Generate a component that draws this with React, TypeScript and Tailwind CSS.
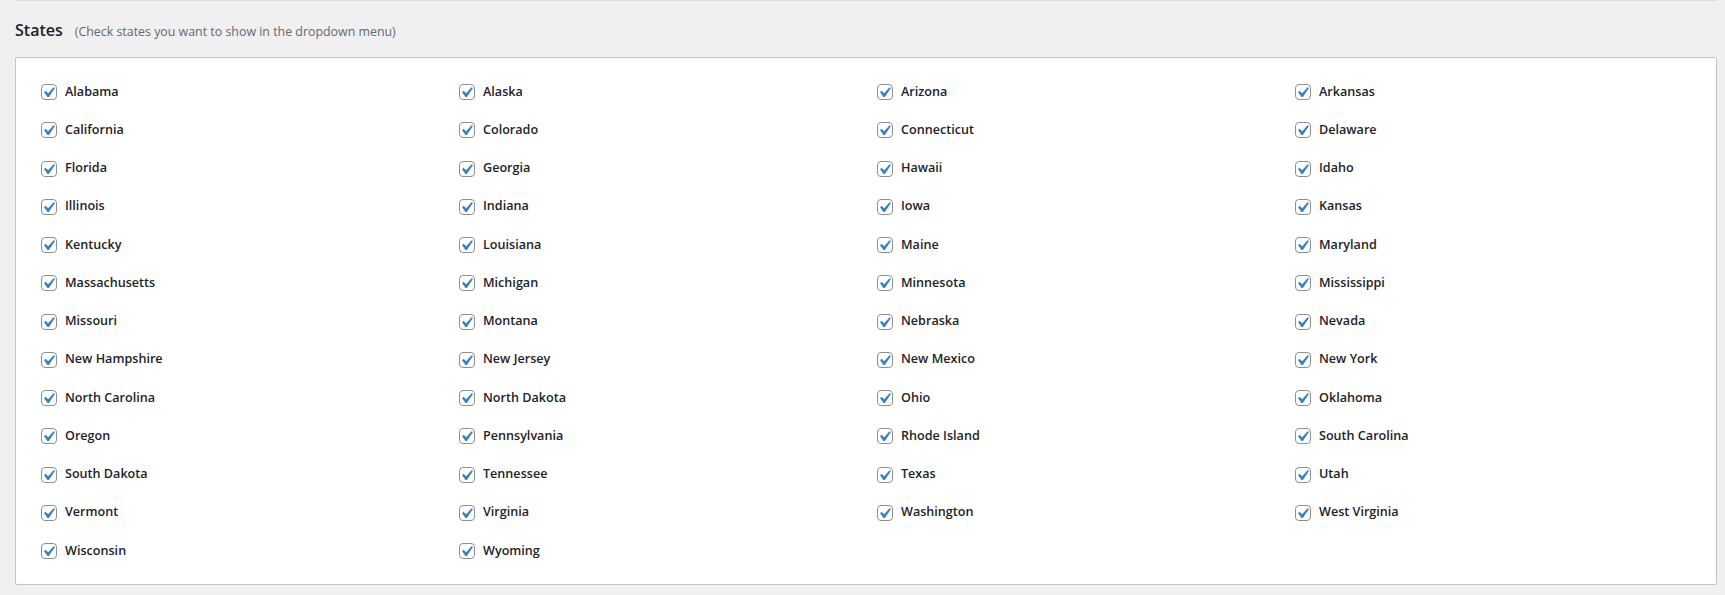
import { useState } from 'react';

const STATES = [
  'Alabama', 'Alaska', 'Arizona', 'Arkansas',
  'California', 'Colorado', 'Connecticut', 'Delaware',
  'Florida', 'Georgia', 'Hawaii', 'Idaho',
  'Illinois', 'Indiana', 'Iowa', 'Kansas',
  'Kentucky', 'Louisiana', 'Maine', 'Maryland',
  'Massachusetts', 'Michigan', 'Minnesota', 'Mississippi',
  'Missouri', 'Montana', 'Nebraska', 'Nevada',
  'New Hampshire', 'New Jersey', 'New Mexico', 'New York',
  'North Carolina', 'North Dakota', 'Ohio', 'Oklahoma',
  'Oregon', 'Pennsylvania', 'Rhode Island', 'South Carolina',
  'South Dakota', 'Tennessee', 'Texas', 'Utah',
  'Vermont', 'Virginia', 'Washington', 'West Virginia',
  'Wisconsin', 'Wyoming',
];

/* WP-style checkbox */
function Check({ checked, onChange }: { checked: boolean; onChange: () => void }) {
  return (
    <button
      type="button"
      onClick={onChange}
      className="relative w-4 h-4 shrink-0 rounded-[4px] border border-[#8c8f94] bg-white"
    >
      {checked && (
        <svg
          viewBox="0 0 20 20"
          className="absolute -top-[3px] -left-[4px] w-[21px] h-[21px]"
        >
          <path d="M14.83 4.89l1.34.94-5.81 8.38H9.02L5.78 9.67l1.34-1.25 2.57 2.4z" fill="#3582c4" />
        </svg>
      )}
    </button>
  );
}

export default function App() {
  const [checked, setChecked] = useState<Record<string, boolean>>(
    () => Object.fromEntries(STATES.map((s) => [s, true]))
  );

  return (
    <main
      className="w-[1725px] h-[595px] bg-[#f0f0f1] pl-[15px] pr-[8px] text-[#1d2327]"
      style={{ fontFamily: '"Open Sans", "Noto Sans", sans-serif' }}
    >
      <div className="h-px bg-[#dcdcde]" />

      {/* Header */}
      <div className="mt-[17px] h-6 flex items-baseline gap-3">
        <h2 className="text-[16px] font-semibold leading-6">States</h2>
        <span className="text-[12.4px] text-[#646970]">
          (Check states you want to show in the dropdown menu)
        </span>
      </div>

      {/* Card */}
      <div className="mt-[15px] bg-white border border-[#c3c4c7] rounded-[2px] pl-[25px] pr-[3px] pt-[15px] pb-[14px]">
        <div className="grid grid-cols-4">
          {STATES.map((s) => (
            <label key={s} className="h-[38.25px] flex items-center gap-2 cursor-pointer">
              <Check
                checked={!!checked[s]}
                onChange={() => setChecked((c) => ({ ...c, [s]: !c[s] }))}
              />
              <span className="text-[12.6px] font-semibold text-[#1d2327]">{s}</span>
            </label>
          ))}
        </div>
      </div>
    </main>
  );
}
